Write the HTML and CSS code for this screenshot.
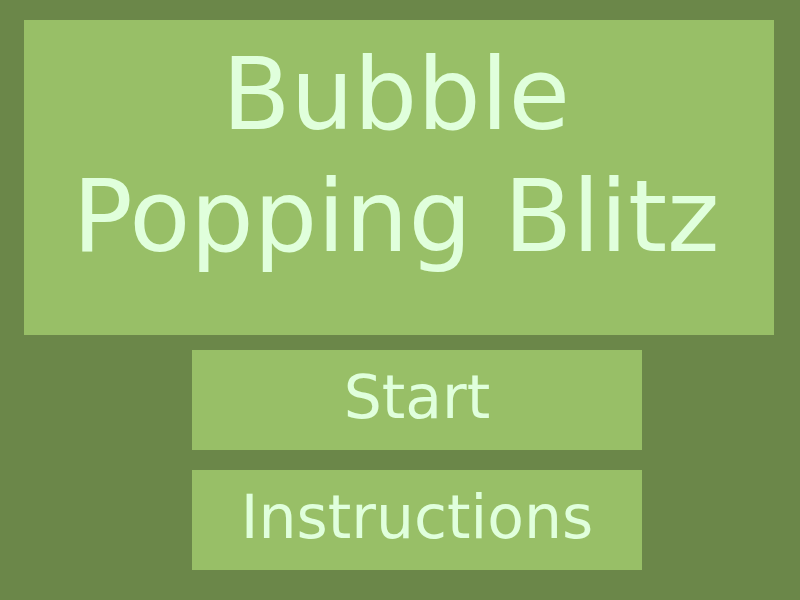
FILE: index.html
```html
<!DOCTYPE html>
<html>
<head>
<meta charset="utf-8">
<link rel="stylesheet" href="styles.css">
</head>
<body>
<div class="screen">
  <div class="title">Bubble<br>Popping Blitz</div>
  <div class="menu">
    <div class="btn">Start</div>
    <div class="btn">Instructions</div>
  </div>
</div>
</body>
</html>
```
FILE: styles.css
```css
html, body {
  margin: 0;
  padding: 0;
  background: #6b8749;
}
.screen {
  width: 800px;
  height: 600px;
  display: flex;
  flex-direction: column;
  align-items: flex-start;
  padding: 20px 0 0 24px;
  box-sizing: border-box;
  font-family: "DejaVu Sans", Verdana, sans-serif;
  color: #e0ffdc;
}
.title {
  width: 750px;
  height: 315px;
  background: #98bf67;
  font-size: 100px;
  line-height: 122px;
  text-align: center;
  box-sizing: border-box;
  padding: 14px 6px 0 0;
}
.menu {
  display: flex;
  flex-direction: column;
  gap: 20px;
  margin-top: 15px;
  margin-left: 168px;
}
.btn {
  width: 450px;
  height: 100px;
  background: #98bf67;
  font-size: 60px;
  line-height: 94px;
  text-align: center;
}
```
